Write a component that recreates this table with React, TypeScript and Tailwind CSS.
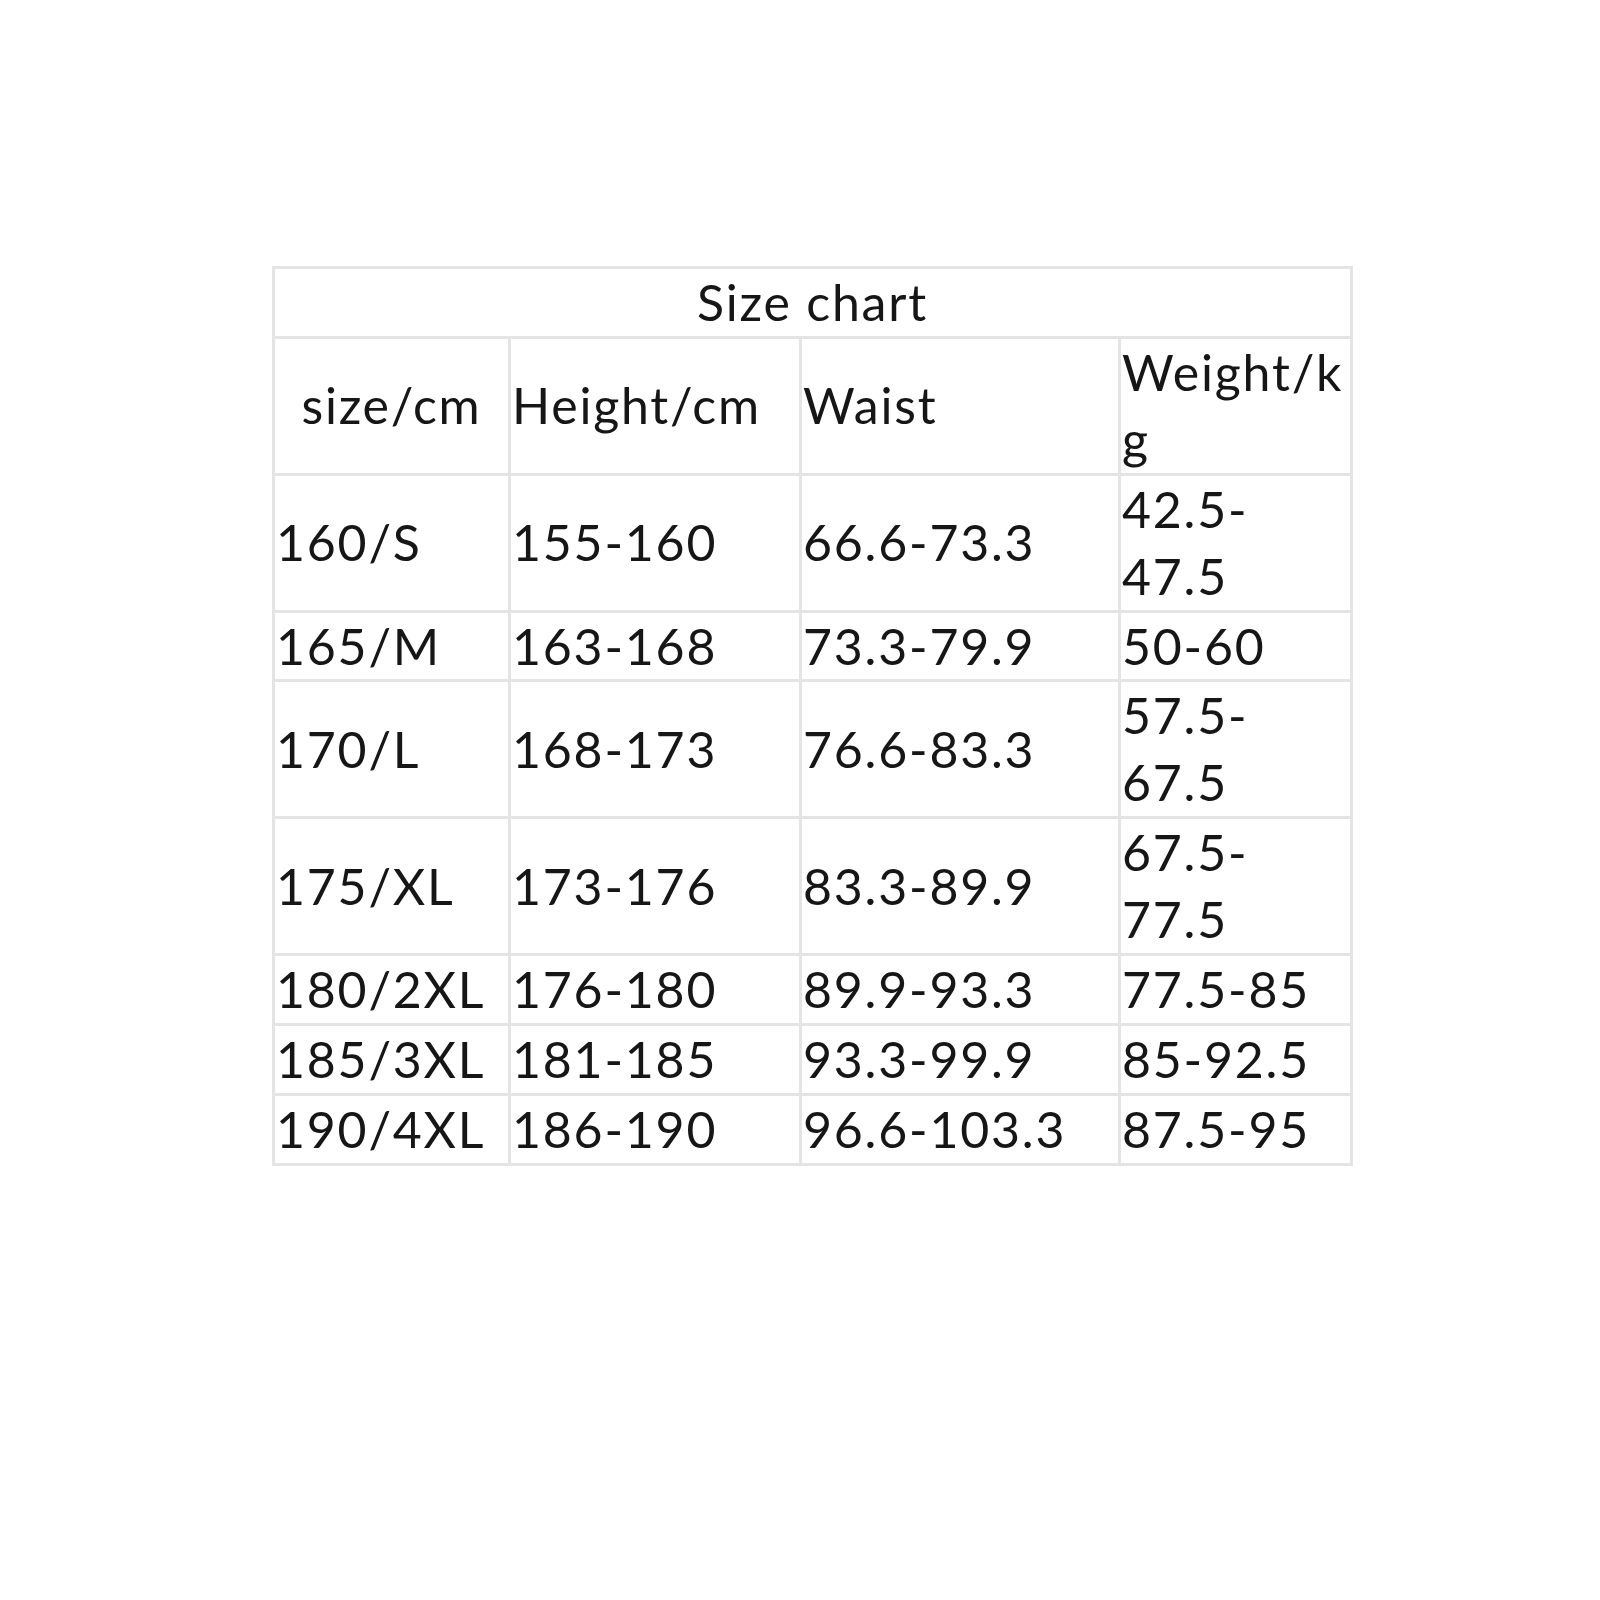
import React from "react";

const rows: [string, string, string, React.ReactNode][] = [
  ["160/S", "155-160", "66.6-73.3", <>42.5-<br />47.5</>],
  ["165/M", "163-168", "73.3-79.9", "50-60"],
  ["170/L", "168-173", "76.6-83.3", <>57.5-<br />67.5</>],
  ["175/XL", "173-176", "83.3-89.9", <>67.5-<br />77.5</>],
  ["180/2XL", "176-180", "89.9-93.3", "77.5-85"],
  ["185/3XL", "181-185", "93.3-99.9", "85-92.5"],
  ["190/4XL", "186-190", "96.6-103.3", "87.5-95"],
];

export default function App() {
  const td = "border-[3px] border-[#e4e4e4] px-[1px] py-0 align-middle whitespace-nowrap overflow-visible";
  return (
    <div className="w-[1600px] h-[1600px] bg-white pt-[266px] pl-[272px]" style={{ fontFamily: 'Lato, "Open Sans", sans-serif' }}>
      <table className="table-fixed border-collapse text-[50px] leading-[66.9px] tracking-[1.8px] text-[#161616]">
        <colgroup>
          <col className="w-[236px]" />
          <col className="w-[291px]" />
          <col className="w-[319px]" />
          <col className="w-[232px]" />
        </colgroup>
        <tbody>
          <tr>
            <td colSpan={4} className={`${td} text-center`}>Size chart</td>
          </tr>
          <tr>
            <td className={`${td} text-center`}>size/cm</td>
            <td className={td}>Height/cm</td>
            <td className={td}>Waist</td>
            <td className={td}>Weight/k<br />g</td>
          </tr>
          {rows.map((r, i) => (
            <tr key={i}>
              <td className={td}>{r[0]}</td>
              <td className={td}>{r[1]}</td>
              <td className={td}>{r[2]}</td>
              <td className={td}>{r[3]}</td>
            </tr>
          ))}
        </tbody>
      </table>
    </div>
  );
}
